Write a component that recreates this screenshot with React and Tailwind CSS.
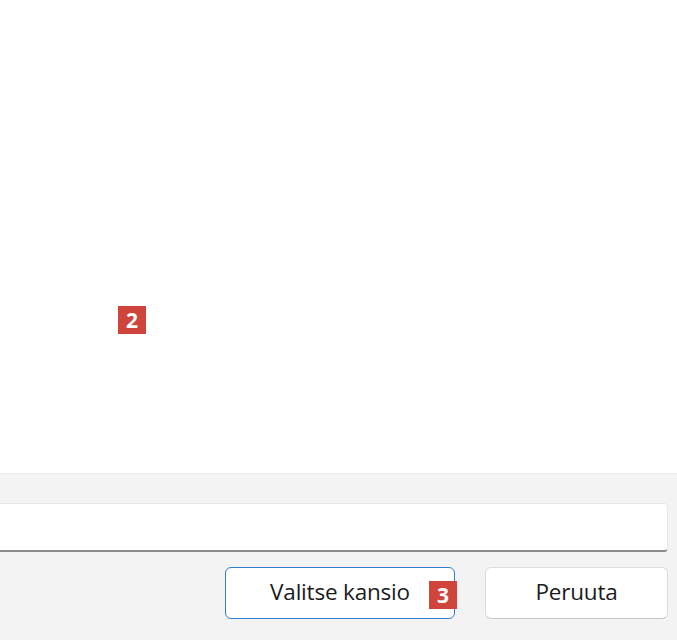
import React from 'react';

function Badge({ n, className }) {
  return (
    <span
      className={`absolute flex h-[28px] w-[28px] items-center justify-center bg-[#d0453b] text-[21px] font-bold leading-none text-white ${className}`}
    >
      {n}
    </span>
  );
}

export default function App() {
  return (
    <div className="flex h-[640px] w-[677px] flex-col overflow-hidden bg-white font-['Segoe_UI','Open_Sans',sans-serif] text-[#1b1b1b]">
      {/* Content area */}
      <div className="relative flex-1 bg-white">
        <Badge n="2" className="left-[118px] top-[306px]" />
      </div>

      {/* Footer */}
      <div className="flex h-[167px] flex-col border-t border-[#ececec] bg-[#f3f3f3] pr-[9px] pt-[29px]">
        <div className="h-[49px] w-full rounded-r-[4px] border border-l-0 border-[#e8e8e8] border-b-2 border-b-[#8a8a8a] bg-white" />

        <div className="mt-[15px] flex justify-end gap-[30px]">
          <div className="relative">
            <button className="flex h-[52px] w-[230px] items-center justify-center rounded-[6px] border-[1.5px] border-[#2f7fd0] bg-white pb-[2px] text-[22.5px] tracking-[-0.2px] text-[#1b1b1b]">
              Valitse kansio
            </button>
            <Badge n="3" className="left-[204px] top-[14px]" />
          </div>
          <button className="flex h-[52px] w-[183px] items-center justify-center rounded-[6px] border border-[#dcdcdc] border-b-[#c8c8c8] bg-white pb-[2px] text-[22.5px] tracking-[-0.2px] text-[#1b1b1b]">
            Peruuta
          </button>
        </div>
      </div>
    </div>
  );
}
